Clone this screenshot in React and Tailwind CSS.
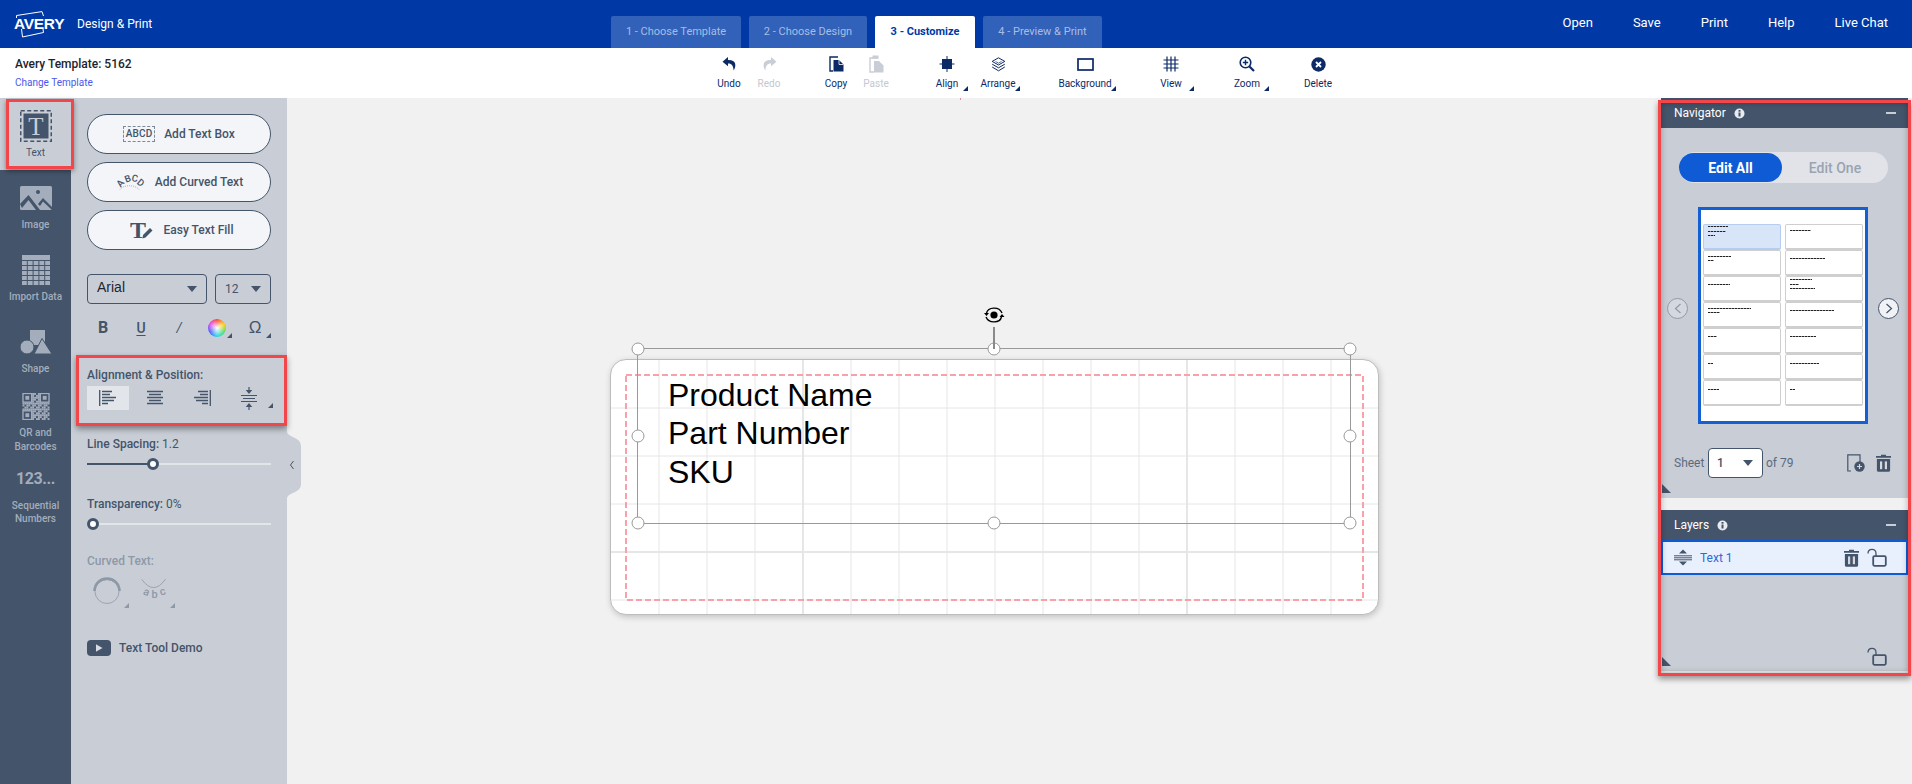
import React from "react";

const slate = "#44546a";
const navy = "#0b2a66";

function Corner({ className }) {
  return <span className={"absolute h-[5px] w-[5px] [clip-path:polygon(100%_0,100%_100%,0_100%)] " + className} />;
}

function Down({ className = "" }) {
  return <span className={"block h-0 w-0 border-x-[5px] border-t-[6px] border-x-transparent border-t-[#44546a] " + className} />;
}

function ToolItem({ icon, label, muted, className = "", children }) {
  return (
    <div className={"relative flex h-full w-10 flex-col items-center pt-2 " + className}>
      <div className="flex h-4 items-center justify-center">{icon}</div>
      <div className={"mt-[5px] whitespace-nowrap text-[10px] leading-[14px] " + (muted ? "text-[#c3c8d0]" : "text-[#0b2a66]")}>{label}</div>
      {children}
    </div>
  );
}

const UndoIcon = ({ color = navy, flip }) => (
  <svg width="15" height="14" viewBox="0 0 15 14" style={flip ? { transform: "scaleX(-1)" } : undefined}>
    <path d="M6 0 L0.5 4.8 L6 9.2 V6.4 C9.6 6.2 11.3 8.3 11.7 13.6 C14.6 8.5 14.3 2.6 6 2.9 Z" fill={color} />
  </svg>
);

const CopyIcon = () => (
  <svg width="15" height="16" viewBox="0 0 15 16">
    <path d="M9 1H1V15H4" fill="none" stroke={navy} strokeWidth="1.4" />
    <path d="M4.5 4H10L14.5 8.5V15.5H4.5Z" fill={navy} />
    <path d="M10 4V8.5H14.5" fill="none" stroke="#fff" strokeWidth=".8" />
  </svg>
);

const PasteIcon = () => (
  <svg width="15" height="18" viewBox="0 0 15 18">
    <path d="M4 3H1V17H5" fill="none" stroke="#c9ced6" strokeWidth="1.4" />
    <rect x="3.5" y="0.5" width="6" height="3.4" fill="#c9ced6" />
    <path d="M5 6H10L14.5 10.5V17.5H5Z" fill="#c9ced6" />
  </svg>
);

const AlignIcon = () => (
  <svg width="16" height="16" viewBox="0 0 16 16">
    <rect x="3" y="3" width="10" height="10" fill={navy} />
    <path d="M8 0V16M0.5 8H15.5" stroke={navy} strokeWidth="1" />
  </svg>
);

const ArrangeIcon = () => (
  <svg width="15" height="15" viewBox="0 0 15 15" fill="none" stroke={navy} strokeWidth="1">
    <path d="M7.5 .8L13.8 4.4L7.5 8L1.2 4.4Z" />
    <path d="M1.2 7.2L7.5 10.8L13.8 7.2" />
    <path d="M1.2 10L7.5 13.8L13.8 10" />
    <path d="M4.5 4.4L7.5 6.2L10.5 4.4" strokeWidth=".7" />
  </svg>
);

const BackgroundIcon = () => (
  <svg width="17" height="13" viewBox="0 0 17 13">
    <rect x="1" y="1" width="15" height="11" fill="none" stroke={navy} strokeWidth="1.7" />
  </svg>
);

const ViewIcon = () => (
  <svg width="16" height="16" viewBox="0 0 16 16" stroke={navy} strokeWidth="1.2">
    <path d="M4 0.5V15.5M8 0.5V15.5M12 0.5V15.5M0.5 4H15.5M0.5 8H15.5M0.5 12H15.5" />
  </svg>
);

const ZoomIcon = () => (
  <svg width="16" height="16" viewBox="0 0 16 16" fill="none" stroke={navy}>
    <circle cx="6.5" cy="6.5" r="5.3" strokeWidth="1.6" />
    <path d="M10.5 10.5L15 15" strokeWidth="2.2" />
    <path d="M6.5 3.8V9.2M3.8 6.5H9.2" strokeWidth="1.4" />
  </svg>
);

const DeleteIcon = () => (
  <svg width="15" height="15" viewBox="0 0 15 15">
    <circle cx="7.5" cy="7.5" r="7.2" fill={navy} />
    <path d="M5 5L10 10M10 5L5 10" stroke="#fff" strokeWidth="1.8" />
  </svg>
);

const Trash = () => (
  <svg width="15" height="18" viewBox="0 0 15 18">
    <path d="M5 2V.8H10V2H15V3.8H0V2Z" fill={slate} />
    <path d="M.9 5H14.1V16.2A1.6 1.6 0 0 1 12.5 17.8H2.5A1.6 1.6 0 0 1 .9 16.2Z" fill={slate} />
    <rect x="4" y="7.4" width="2.2" height="7.8" fill="#d5d9df" />
    <rect x="8.8" y="7.4" width="2.2" height="7.8" fill="#d5d9df" />
  </svg>
);

const Unlock = () => (
  <svg width="20" height="19" viewBox="0 0 20 19" fill="none" stroke={slate}>
    <rect x="6.2" y="8.2" width="12.6" height="9.6" rx="1.2" strokeWidth="1.8" />
    <path d="M1 5.6C1 .1 9 -.2 9 5.4V8" strokeWidth="1.3" />
  </svg>
);

const RailImageIcon = () => (
  <svg width="32" height="24" viewBox="0 0 32 24">
    <rect width="32" height="24" rx="1.5" fill="#a3adbb" />
    <circle cx="18" cy="6" r="2" fill={slate} />
    <path d="M0 18L8.5 9L20 24H16L8.5 14L2 22Z" fill={slate} />
    <path d="M18 18L23 12L32 21V24L23 15.5L20 20Z" fill={slate} />
  </svg>
);

const RailGridIcon = () => (
  <svg width="28" height="30" viewBox="0 0 28 30" fill="#a3adbb">
    <rect width="28" height="5" />
    {[6, 11, 16, 21, 26].map((y) =>
      [0, 5.8, 11.6, 17.4, 23.2].map((x) => <rect key={x + "-" + y} x={x} y={y} width="4.8" height="4" />)
    )}
  </svg>
);

const RailShapeIcon = () => (
  <svg width="32" height="24" viewBox="0 0 32 24" fill="#a3adbb">
    <rect x="10" y="0" width="15" height="15" />
    <circle cx="7" cy="17" r="7" stroke={slate} strokeWidth="1" />
    <path d="M22 8.5L32 24H14Z" stroke={slate} strokeWidth="1" />
  </svg>
);

function RailQrIcon() {
  const cells = [];
  for (let y = 0; y < 14; y++) {
    for (let x = 0; x < 14; x++) {
      const finder = (x < 5 && y < 5) || (x > 8 && y < 5) || (x < 5 && y > 8);
      if (!finder && (x * 7 + y * 13 + x * y) % 3 !== 1) {
        cells.push(<rect key={x + "_" + y} x={x * 2} y={y * 2} width="2" height="2" />);
      }
    }
  }
  return (
    <svg width="28" height="28" viewBox="0 0 28 28" fill="#a3adbb">
      {cells}
      {[[0, 0], [18, 0], [0, 18]].map(([a, b]) => (
        <g key={a + "f" + b}>
          <rect x={a + 0.5} y={b + 0.5} width="9" height="9" fill="none" stroke="#a3adbb" strokeWidth="1.4" />
          <rect x={a + 3} y={b + 3} width="4" height="4" />
        </g>
      ))}
    </svg>
  );
}

function AddButton({ icon, label, iconClass }) {
  return (
    <button className="flex h-10 w-full items-center justify-center rounded-full border border-[#44546a] bg-[#f3f5f8] text-xs font-medium text-[#44546a]">
      <span className={iconClass}>{icon}</span>
      <span>{label}</span>
    </button>
  );
}

function ArcLetter({ x, y, r, size, fill, children }) {
  return (
    <text x={x} y={y} transform={`rotate(${r} ${x} ${y})`} textAnchor="middle" dominantBaseline="central" fontSize={size} fill={fill}>
      {children}
    </text>
  );
}

const thumbs = [
  [[[2, 20], [4.7, 18], [4.3, 7]], [[6, 21]]],
  [[[5.7, 23], [4.3, 6]], [[7.7, 35]]],
  [[[7.7, 22]], [[3, 22], [5, 9], [3.7, 25]]],
  [[[5.7, 43], [4, 12]], [[8, 44]]],
  [[[8, 9]], [[8, 26]]],
  [[[8.7, 5]], [[8.7, 29]]],
  [[[9, 11]], [[9, 5]]],
];

function Cell({ rows, active }) {
  return (
    <div className={"h-[26px] rounded-[2px] border border-b-2 pl-[4px] " + (active ? "border-[#b6cdf2] bg-[#d8e4f8]" : "border-[#cfcfcf] bg-white")}>
      {rows.map(([t, w], i) => (
        <div
          key={i}
          className="h-px bg-[repeating-linear-gradient(90deg,#222222_0_2px,#9a9a9a_2px_3px)]"
          style={{ marginTop: t - 1, width: w }}
        />
      ))}
    </div>
  );
}

function Handle({ className }) {
  return <span className={"absolute h-[13px] w-[13px] -translate-x-1/2 -translate-y-1/2 rounded-full border border-[#999] bg-white " + className} />;
}

function LabelGrid() {
  const xs = [48, 96, 144, 192, 240, 288, 336, 384, 432, 480, 528, 576, 624, 672, 720];
  const ys = [48, 96, 144, 192, 240];
  return (
    <svg width="769" height="256" className="block">
      {xs.map((x) => (
        <line key={x} x1={x} x2={x} y1="0" y2="256" stroke="#e6e6e6" strokeWidth={x === 192 || x === 576 ? 2 : 1} />
      ))}
      {ys.map((y) => (
        <line key={y} x1="0" x2="769" y1={y} y2={y} stroke="#e6e6e6" strokeWidth={y === 192 ? 2 : 1} />
      ))}
      <rect x="15" y="15" width="737" height="225" fill="none" stroke="#f8a1aa" strokeWidth="2" strokeDasharray="6 3" />
    </svg>
  );
}

export default function App() {
  return (
    <div className="flex h-screen w-full flex-col overflow-hidden bg-[#f1f1f1] [font-family:Roboto,sans-serif]">
      {/* Header */}
      <header className="flex h-12 shrink-0 items-stretch bg-[#0039a6] pr-6 text-white">
        <div className="flex w-[611px] items-center pl-[14px]">
          <div className="relative h-[26px] w-[53px]">
            <svg width="30" height="27" viewBox="0 0 30 27" className="absolute left-[2px] top-0" fill="none" stroke="#fff" strokeWidth="1">
              <path d="M0.5 7V4.5L26 .6L27.5 5" />
              <path d="M5.5 18L6.5 26L27.5 21.5L27 18" />
            </svg>
            <span className="absolute left-0 top-[4px] text-[15.5px] font-black leading-[18px] tracking-[-0.3px] [font-family:'Liberation_Sans',sans-serif] text-white">AVERY</span>
          </div>
          <span className="ml-[10px] text-xs leading-4">Design &amp; Print</span>
        </div>
        <nav className="flex items-end gap-2 pt-4 text-[11px]">
          <div className="flex h-8 w-[130px] items-center justify-center rounded-t-[2px] bg-[#3161b9] text-[#a9bde2]">1 - Choose Template</div>
          <div className="flex h-8 w-[118px] items-center justify-center rounded-t-[2px] bg-[#3161b9] text-[#a9bde2]">2 - Choose Design</div>
          <div className="flex h-8 w-[100px] items-center justify-center rounded-t-[2px] bg-white font-bold text-[#0039a6]">3 - Customize</div>
          <div className="flex h-8 w-[119px] items-center justify-center rounded-t-[2px] bg-[#3161b9] text-[#a9bde2]">4 - Preview &amp; Print</div>
        </nav>
        <div className="ml-auto flex items-center gap-10 pb-[2px] text-[13px] font-normal">
          <span>Open</span>
          <span>Save</span>
          <span>Print</span>
          <span>Help</span>
          <span>Live Chat</span>
        </div>
      </header>

      {/* Toolbar */}
      <div className="flex h-[50px] shrink-0 items-stretch bg-white">
        <div className="w-[709px] pl-[15px] pt-[8px]">
          <div className="text-xs font-medium leading-4 text-[#1c2430]">Avery Template: 5162</div>
          <div className="mt-[4px] text-[10px] leading-[14px] text-[#4a58ee]">Change Template</div>
        </div>
        <ToolItem icon={<UndoIcon />} label="Undo" />
        <ToolItem icon={<UndoIcon color="#c9ced6" flip />} label="Redo" muted />
        <ToolItem icon={<CopyIcon />} label="Copy" className="ml-[27px]" />
        <ToolItem icon={<PasteIcon />} label="Paste" muted />
        <ToolItem icon={<AlignIcon />} label="Align" className="ml-[31px]">
          <Corner className="left-[36px] top-[38px] bg-[#0b2a66]" />
        </ToolItem>
        <ToolItem icon={<ArrangeIcon />} label="Arrange" className="ml-[11px]">
          <Corner className="left-[37px] top-[38px] bg-[#0b2a66]" />
        </ToolItem>
        <ToolItem icon={<BackgroundIcon />} label="Background" className="ml-[47px]">
          <Corner className="left-[46px] top-[38px] bg-[#0b2a66]" />
        </ToolItem>
        <ToolItem icon={<ViewIcon />} label="View" className="ml-[46px]">
          <Corner className="left-[38px] top-[38px] bg-[#0b2a66]" />
        </ToolItem>
        <ToolItem icon={<ZoomIcon />} label="Zoom" className="ml-[36px]">
          <Corner className="left-[37px] top-[38px] bg-[#0b2a66]" />
        </ToolItem>
        <ToolItem icon={<DeleteIcon />} label="Delete" className="ml-[31px]" />
      </div>

      {/* Main */}
      <div className="flex min-h-0 flex-1">
        {/* Rail */}
        <aside className="relative z-10 flex w-[71px] shrink-0 flex-col items-center bg-[#44546a] text-[10px] font-medium text-[#a3adbb]">
          <div className="relative flex h-[72px] w-full flex-col items-center bg-[#c9ced6] pt-3 text-[#44546a]">
            <svg width="32" height="32" viewBox="0 0 32 32">
              <rect x="0.75" y="0.75" width="30.5" height="30.5" fill="none" stroke={slate} strokeWidth="1.5" strokeDasharray="4 2.5" />
              <rect x="3.5" y="3.5" width="25" height="25" fill={slate} />
              <text x="16" y="25" textAnchor="middle" fontSize="25" fill="#c9ced6" fontFamily="'Liberation Serif',serif">T</text>
            </svg>
            <span className="mt-1 font-normal leading-[13px]">Text</span>
            <span className="absolute left-[6px] top-[1px] h-[70px] w-[68px] border-[3px] border-[#f2464a] shadow-[0_2px_5px_rgba(0,0,0,.4)]" />
          </div>
          <div className="flex h-[72px] w-full flex-col items-center pt-4">
            <RailImageIcon />
            <span className="mt-[8px] leading-[13px]">Image</span>
          </div>
          <div className="flex h-[72px] w-full flex-col items-center pt-[13px]">
            <RailGridIcon />
            <span className="mt-[5px] whitespace-nowrap leading-[13px]">Import Data</span>
          </div>
          <div className="flex h-[66px] w-full flex-col items-center pt-4">
            <RailShapeIcon />
            <span className="mt-[8px] leading-[13px]">Shape</span>
          </div>
          <div className="flex h-[74px] w-full flex-col items-center pt-[13px]">
            <RailQrIcon />
            <span className="mt-[6px] text-center leading-[14px]">QR and<br />Barcodes</span>
          </div>
          <div className="flex w-full flex-col items-center pt-[15px]">
            <span className="text-[16px] font-bold leading-5 tracking-[-0.4px]">123...</span>
            <span className="mt-[10px] text-center leading-[13px]">Sequential<br />Numbers</span>
          </div>
        </aside>

        {/* Tool panel */}
        <section className="relative flex w-[216px] shrink-0 flex-col bg-[#c9ced6] px-4 pt-4 text-xs font-medium text-[#44546a]">
          <div className="flex flex-col gap-2">
            <AddButton
              label="Add Text Box"
              iconClass="mr-[9px] flex h-4 w-8 items-center justify-center border border-dashed border-[#7d8898] text-[10px] leading-none tracking-[0.2px]"
              icon="ABCD"
            />
            <AddButton
              label="Add Curved Text"
              iconClass="mr-[10px] block h-4 w-[30px]"
              icon={
                <svg width="30" height="16" viewBox="0 0 30 16" className="block">
                  <ArcLetter x={5} y={9} r={-50} size={9.5} fill={slate}>A</ArcLetter>
                  <ArcLetter x={12.5} y={4.5} r={-20} size={9.5} fill={slate}>B</ArcLetter>
                  <ArcLetter x={20} y={4} r={10} size={9.5} fill={slate}>C</ArcLetter>
                  <ArcLetter x={26} y={8.5} r={40} size={9.5} fill={slate}>D</ArcLetter>
                  <path d="M5 15.5C9 10.5 20 10.5 24 15.5" fill="none" stroke="#7d8898" strokeWidth=".6" strokeDasharray="1 1" />
                </svg>
              }
            />
            <AddButton
              label="Easy Text Fill"
              iconClass="ml-[5px] mr-[11px] block h-[20px] w-[23px]"
              icon={
                <svg width="23" height="20" viewBox="0 0 23 20" className="block">
                  <text x="0" y="18" fontSize="24" fontWeight="700" fill={slate} fontFamily="'Liberation Serif',serif">T</text>
                  <path d="M13 15L20 8L22.5 10.5L15.5 17.5L12.5 18.5Z" fill={slate} />
                </svg>
              }
            />
          </div>

          <div className="mt-6 flex gap-2">
            <div className="flex h-[30px] w-[120px] items-center justify-between rounded-[4px] border border-[#44546a] pl-[9px] pr-[9px] pb-[4px]">
              <span className="text-sm font-normal text-[#1f2530] [font-family:'Liberation_Sans',sans-serif]">Arial</span>
              <Down className="mt-[4px]" />
            </div>
            <div className="flex h-[30px] w-[56px] items-center justify-between rounded-[4px] border border-[#44546a] pl-[9px] pr-[9px]">
              <span className="text-xs font-normal">12</span>
              <Down />
            </div>
          </div>

          <div className="relative mt-3 flex h-6 items-center">
            <span className="absolute left-[16px] -translate-x-1/2 text-base font-bold">B</span>
            <span className="absolute left-[54px] -translate-x-1/2 text-sm font-medium underline underline-offset-2">U</span>
            <span className="absolute left-[92px] -translate-x-1/2 text-base font-bold [font-family:'Liberation_Serif',serif] italic">/</span>
            <span className="absolute left-[121px] h-[18px] w-[18px] rounded-full bg-[radial-gradient(circle,#ffffff_0%,rgba(255,255,255,0)_70%),conic-gradient(#ff3b30,#ffcc00,#4cd964,#22d3ee,#3b5bff,#d946ef,#ff3b30)]" />
            <Corner className="left-[140px] top-[17px] bg-[#44546a]" />
            <span className="absolute left-[168px] -translate-x-1/2 text-[17px] font-normal [font-family:'Liberation_Sans',sans-serif]">Ω</span>
            <Corner className="left-[179px] top-[17px] bg-[#44546a]" />
          </div>

          <div className="relative mt-[27px]">
            <div className="leading-4">Alignment &amp; Position:</div>
            <div className="mt-[3px] flex h-6 items-center">
              <span className="flex h-6 w-[42px] items-center justify-center bg-[#e2e5e9]">
                <svg width="18" height="16" viewBox="0 0 18 16" stroke={slate} strokeWidth="1.3">
                  <path d="M.7 0V16" />
                  <path d="M3 1.5H13M3 4.5H11M3 7.5H17M3 10.5H15M3 13.5H9" />
                </svg>
              </span>
              <span className="ml-[5px] flex h-6 w-[42px] items-center justify-center">
                <svg width="18" height="16" viewBox="0 0 18 16" stroke={slate} strokeWidth="1.3">
                  <path d="M1 1.5H17M3 4.5H15M1 7.5H17M3 10.5H15M1 13.5H17" />
                </svg>
              </span>
              <span className="ml-[5px] flex h-6 w-[42px] items-center justify-center">
                <svg width="18" height="16" viewBox="0 0 18 16" stroke={slate} strokeWidth="1.3">
                  <path d="M17.3 0V16" />
                  <path d="M5 1.5H15M7 4.5H15M1 7.5H15M3 10.5H15M9 13.5H15" />
                </svg>
              </span>
              <span className="relative ml-[5px] flex h-6 w-[42px] items-center justify-center">
                <svg width="18" height="23" viewBox="0 0 18 23" stroke={slate} strokeWidth="1.2" fill="none">
                  <path d="M1 8.5H17M3 11.5H15M1 14.5H17" />
                  <path d="M9 0V4M9 19V23" />
                  <path d="M7 3.5H11L9 6ZM7 19.5H11L9 17Z" fill={slate} />
                </svg>
                <Corner className="right-[-3px] bottom-[2px] bg-[#44546a]" />
              </span>
            </div>
            <span className="absolute left-[-11px] right-[-16px] top-[-12px] h-[71px] border-[3px] border-[#f2464a] shadow-[0_3px_6px_rgba(0,0,0,.4)]" />
          </div>

          <div className="mt-[26px] leading-4">
            Line Spacing: <span className="font-normal">1.2</span>
          </div>
          <div className="relative mt-[6px] flex h-3 items-center">
            <div className="h-[2px] w-full bg-[#e2e5e9]" />
            <div className="absolute left-0 h-[2px] w-[66px] bg-[#44546a]" />
            <div className="absolute left-[60px] h-3 w-3 rounded-full border-[3px] border-[#44546a] bg-white" />
          </div>

          <div className="mt-[26px] leading-4">
            Transparency: <span className="font-normal">0%</span>
          </div>
          <div className="relative mt-[6px] flex h-3 items-center">
            <div className="h-[2px] w-full bg-[#e2e5e9]" />
            <div className="absolute left-0 h-3 w-3 rounded-full border-[3px] border-[#44546a] bg-white" />
          </div>

          <div className="mt-[23px] leading-4 text-[#8e99a8]">Curved Text:</div>
          <div className="mt-[8px] flex h-8 items-center">
            <div className="relative ml-[6px] h-8 w-8">
              <svg width="28" height="28" viewBox="0 0 28 28" fill="none" stroke="#8e99a8">
                <circle cx="14" cy="14.5" r="12" strokeWidth=".8" />
                <path d="M1.5 14C2 -2.5 26 -2.5 26.5 14" strokeWidth="2.6" />
              </svg>
              <Corner className="left-[31px] top-[26px] bg-[#8e99a8]" />
            </div>
            <div className="relative ml-[14px] h-8 w-8">
              <svg width="28" height="26" viewBox="0 0 28 26" fill="none" className="block">
                <path d="M2.7 2.3Q14.7 19 26.7 2" stroke="#8e99a8" strokeWidth=".8" />
                <ArcLetter x={7.5} y={15} r={20} size={11} fill="#8e99a8">a</ArcLetter>
                <ArcLetter x={15.5} y={17} r={0} size={11} fill="#8e99a8">b</ArcLetter>
                <ArcLetter x={23.5} y={14.5} r={-20} size={11} fill="#8e99a8">c</ArcLetter>
              </svg>
              <Corner className="left-[31px] top-[26px] bg-[#8e99a8]" />
            </div>
          </div>

          <div className="mt-[31px] flex h-4 items-center">
            <span className="flex h-4 w-6 items-center justify-center rounded-[4px] bg-[#44546a]">
              <span className="block h-2 w-[7px] bg-[#d7dbe1] [clip-path:polygon(0_0,100%_50%,0_100%)]" />
            </span>
            <span className="ml-2">Text Tool Demo</span>
          </div>

          <div className="absolute left-full top-[334px] h-[66px] w-[14px]">
            <svg width="14" height="66" viewBox="0 0 14 66">
              <path d="M0 0C2 6 14 5 14 14V52C14 61 2 60 0 66Z" fill="#c9ced6" />
              <path d="M6.5 29L3.5 33L6.5 37" fill="none" stroke={slate} strokeWidth="1" />
            </svg>
          </div>
        </section>

        {/* Canvas */}
        <main className="relative min-w-0 flex-1">
          <span className="absolute left-[673px] top-0 h-[2px] w-px bg-[#e58aa6]" />
          <div className="absolute left-[323px] top-[261px] h-[256px] w-[769px]">
            <div className="h-full w-full overflow-hidden rounded-2xl border border-[#bdbdbd] bg-white shadow-[1px_2px_6px_rgba(0,0,0,.2)]">
              <LabelGrid />
            </div>
            <div className="absolute left-[27px] top-[-11px] h-[176px] w-[714px] border border-[#999999] [font-family:'Liberation_Sans',sans-serif]">
              <div className="absolute left-[30px] top-[27px] text-[32px] leading-[38.4px] text-black">
                <div>Product Name</div>
                <div>Part Number</div>
                <div>SKU</div>
              </div>
              <Handle className="left-0 top-0" />
              <Handle className="left-1/2 top-0" />
              <Handle className="left-full top-0" />
              <Handle className="left-0 top-1/2" />
              <Handle className="left-full top-1/2" />
              <Handle className="left-0 top-full" />
              <Handle className="left-1/2 top-full" />
              <Handle className="left-full top-full" />
              <span className="absolute left-1/2 top-[-22px] h-[22px] w-[2px] -translate-x-1/2 bg-[#8a8a8a]" />
              <span className="absolute left-1/2 top-[-45px] -translate-x-1/2">
                <svg width="22" height="22" viewBox="0 0 22 22" fill="none" stroke="#000" strokeWidth="1.4" className="block">
                  <circle cx="11" cy="11" r="3.6" fill="#000" stroke="none" />
                  <path d="M3.5 9C5 3 16 2 19 9" />
                  <path d="M18.5 13C17 19 6 20 3 13" />
                  <path d="M1 9H6L3.5 12ZM16.5 13H21.5L19 10Z" fill="#000" stroke="none" />
                </svg>
              </span>
            </div>
          </div>
        </main>

        {/* Right column */}
        <aside className="relative mr-1 flex h-[573px] w-[247px] shrink-0 flex-col">
          <div className="flex h-[30px] shrink-0 items-center bg-[#44546a] pl-[13px] pr-[12px] text-xs text-white">
            <span>Navigator</span>
            <svg width="11" height="11" viewBox="0 0 11 11" className="ml-2">
              <circle cx="5.5" cy="5.5" r="5" fill="#e8ebef" />
              <rect x="4.5" y="4.5" width="2" height="4" fill="#44546a" />
              <rect x="4.5" y="2" width="2" height="1.7" fill="#44546a" />
            </svg>
            <span className="ml-auto h-[2px] w-[10px] bg-[#c9ced6]" />
          </div>
          <div className="relative h-[370px] shrink-0 bg-[#c9ced6] pt-6">
            <div className="ml-[18px] flex h-[31px] w-[209px] items-center rounded-full bg-[#e1e3e8] text-sm">
              <div className="flex h-[29px] w-[103px] items-center justify-center rounded-full bg-[#0f5bd6] font-bold text-white">Edit All</div>
              <div className="flex flex-1 items-center justify-center font-medium text-[#9aa3b0]">Edit One</div>
            </div>

            <div className="mt-6 flex items-start pl-[6px]">
              <div className="mt-[91px] flex h-[21px] w-[21px] items-center justify-center rounded-full border border-[#8f9aa8] bg-[#d5d9df]">
                <svg width="8" height="11" viewBox="0 0 8 11" fill="none" stroke="#8f9aa8" strokeWidth="1.2"><path d="M6.5 1L1.5 5.5L6.5 10" /></svg>
              </div>
              <div className="ml-[10px] h-[217px] w-[170px] border-[3px] border-[#1460d2] bg-white px-[2px] pt-[14px]">
                <div className="grid grid-cols-2 gap-x-1">
                  {thumbs.map((row, r) =>
                    row.map((cell, c) => <Cell key={r + "-" + c} rows={cell} active={r === 0 && c === 0} />)
                  )}
                </div>
              </div>
              <div className="ml-[10px] mt-[91px] flex h-[21px] w-[21px] items-center justify-center rounded-full border border-[#44546a] bg-[#f0f2f5]">
                <svg width="8" height="11" viewBox="0 0 8 11" fill="none" stroke="#44546a" strokeWidth="1.2"><path d="M1.5 1L6.5 5.5L1.5 10" /></svg>
              </div>
            </div>

            <div className="mt-6 flex items-center pl-[13px] pr-[17px] text-xs text-[#5a6a80]">
              <span className="w-[34px]">Sheet</span>
              <div className="flex h-[30px] w-[55px] items-center justify-between rounded-[4px] border border-[#44546a] bg-white pl-[8px] pr-[9px] text-[#44546a]">
                <span className="text-xs font-medium">1</span>
                <Down />
              </div>
              <span className="ml-[3px]">of 79</span>
              <svg width="18" height="18" viewBox="0 0 18 18" className="ml-auto" fill="none" stroke={slate}>
                <path d="M4 17H.8V.8H13V8" strokeWidth="1.2" />
                <circle cx="12.5" cy="12.5" r="5.2" fill={slate} stroke="none" />
                <path d="M12.5 10V15M10 12.5H15" stroke="#d5d9df" strokeWidth="1.2" />
              </svg>
              <span className="ml-[11px] flex"><Trash /></span>
            </div>
            <span className="absolute bottom-[5px] left-px h-[9px] w-[9px] bg-[#44546a] [clip-path:polygon(0_0,0_100%,100%_100%)]" />
          </div>

          <div className="mt-3 flex h-[30px] shrink-0 items-center bg-[#44546a] pl-[13px] pr-[12px] text-xs text-white">
            <span>Layers</span>
            <svg width="11" height="11" viewBox="0 0 11 11" className="ml-2">
              <circle cx="5.5" cy="5.5" r="5" fill="#e8ebef" />
              <rect x="4.5" y="4.5" width="2" height="4" fill="#44546a" />
              <rect x="4.5" y="2" width="2" height="1.7" fill="#44546a" />
            </svg>
            <span className="ml-auto h-[2px] w-[10px] bg-[#c9ced6]" />
          </div>
          <div className="flex h-[35px] shrink-0 items-center border-2 border-[#0f5bd6] bg-[#e8f0fe] pl-[11px] pr-[19px]">
            <svg width="18" height="17" viewBox="0 0 18 17" stroke={slate} fill={slate}>
              <path d="M5 4.5L9 .5L13 4.5Z" stroke="none" />
              <path d="M0 6.8H18M0 8.8H18M0 10.8H18" strokeWidth="1" />
              <path d="M5 12.5L9 16.5L13 12.5Z" stroke="none" />
            </svg>
            <span className="ml-2 text-xs text-[#2c6ad8]">Text 1</span>
            <span className="ml-auto flex"><Trash /></span>
            <span className="ml-[8px] flex"><Unlock /></span>
          </div>
          <div className="relative flex flex-1 items-end justify-end bg-[#c9ced6] pb-[5px] pr-[21px]">
            <Unlock />
            <span className="absolute bottom-[5px] left-px h-[9px] w-[9px] bg-[#44546a] [clip-path:polygon(0_0,0_100%,100%_100%)]" />
          </div>

          <span className="pointer-events-none absolute -left-[3px] -right-[3px] top-[2px] -bottom-[5px] border-[3px] border-[#f2464a] shadow-[0_3px_6px_rgba(0,0,0,.4),inset_0_0_6px_rgba(0,0,0,.3)]" />
        </aside>
      </div>
    </div>
  );
}
